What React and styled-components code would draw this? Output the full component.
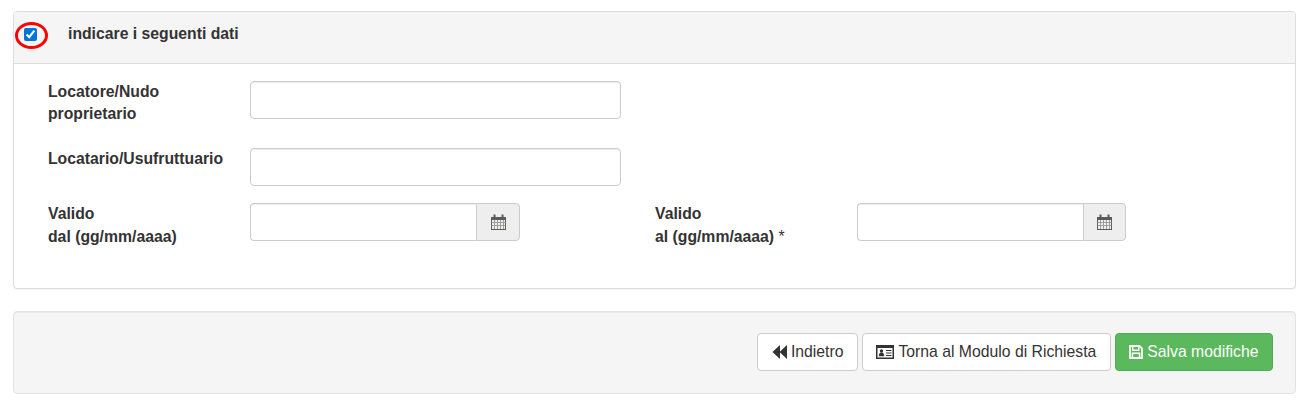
import React from "react";
import styled, { createGlobalStyle } from "styled-components";

const Global = createGlobalStyle`
  html, body { margin: 0; padding: 0; background: #fff; }
  body { font-family: "Liberation Sans", Arial, sans-serif; font-size: 15.75px; line-height: 22.5px; color: #333; }
  * { box-sizing: border-box; }
`;

const Page = styled.div`
  width: 1312px;
  height: 402px;
  padding: 11px 16px 0 13px;
  overflow: hidden;
`;

const Panel = styled.section`
  position: relative;
  border: 1px solid #ddd;
  border-radius: 4px;
  background: #fff;
  box-shadow: 0 1px 1px rgba(0, 0, 0, 0.05);
  height: 278px;
`;

const Heading = styled.header`
  height: 52px;
  display: flex;
  align-items: flex-start;
  background: #f5f5f5;
  border-bottom: 1px solid #ddd;
  border-radius: 3px 3px 0 0;
  padding: 11px 0 0 10px;
`;

const Check = styled.input`
  width: 13px;
  height: 13px;
  margin: 5px 0 0 0;
  accent-color: #0075d8;
`;

const HeadingTitle = styled.span`
  margin-left: 31px;
  font-weight: 700;
  color: #333;
`;

const Marker = styled.span`
  position: absolute;
  left: 0.5px;
  top: 10px;
  width: 33px;
  height: 27px;
  border: 3.5px solid #f00;
  border-radius: 50%;
  pointer-events: none;
`;

const Body = styled.div`
  padding: 16px 0 0 34px;
  display: flex;
  flex-direction: column;
`;

const Row = styled.div`
  display: flex;
  align-items: flex-start;
  height: ${(p) => p.$height}px;
`;

const Label = styled.label`
  display: block;
  width: 202px;
  flex: none;
  font-weight: 700;
  line-height: 22.5px;
  padding-top: ${(p) => p.$nudge ?? 0.5}px;
`;

const Asterisk = styled.span`
  font-weight: 400;
`;

const TextInput = styled.input`
  display: block;
  width: 371px;
  height: 38px;
  margin-top: 1px;
  border: 1px solid #ccc;
  border-radius: 4px;
  background: #fff;
  box-shadow: inset 0 1px 1px rgba(0, 0, 0, 0.075);
`;

const DateGroup = styled.div`
  display: flex;
  width: ${(p) => p.$width}px;
  height: 38px;
  margin-top: 1px;
  flex: none;
`;

const DateInput = styled.input`
  flex: 1;
  min-width: 0;
  height: 38px;
  border: 1px solid #ccc;
  border-right: 0;
  border-radius: 4px 0 0 4px;
  background: #fff;
  box-shadow: inset 0 1px 1px rgba(0, 0, 0, 0.075);
`;

const Addon = styled.span`
  width: ${(p) => p.$width}px;
  flex: none;
  display: flex;
  align-items: center;
  justify-content: center;
  background: #eee;
  border: 1px solid #ccc;
  border-radius: 0 4px 4px 0;
`;

const SecondColumn = styled.div`
  display: flex;
  margin-left: 135px;
`;

const ActionPanel = styled.section`
  margin-top: 22px;
  height: 83px;
  border: 1px solid #e3e3e3;
  border-radius: 4px;
  background: #f5f5f5;
  box-shadow: inset 0 1px 1px rgba(0, 0, 0, 0.05);
  display: flex;
  justify-content: flex-end;
  align-items: flex-start;
  gap: 4px;
  padding: 21px 22px 0 0;
`;

const Button = styled.button`
  height: 38px;
  padding: 0 13.5px;
  display: inline-flex;
  align-items: center;
  gap: 4px;
  font: 400 15.75px/22.5px "Liberation Sans", Arial, sans-serif;
  color: ${(p) => (p.$primary ? "#fff" : "#333")};
  background: ${(p) => (p.$primary ? "#5cb85c" : "#fff")};
  border: 1px solid ${(p) => (p.$primary ? "#4cae4c" : "#ccc")};
  border-radius: 4px;
  white-space: nowrap;
`;

const Calendar = () => (
  <svg width="15" height="16" viewBox="0 0 15 16" fill="none" aria-hidden="true">
    <rect x="0.5" y="3.5" width="14" height="12" fill="#f2f0ec" stroke="#5a5a5a" />
    <rect x="0.5" y="3" width="14" height="3" fill="#5a5a5a" />
    <path d="M3.5 0.5v3.5M11.5 0.5v3.5" stroke="#5a5a5a" strokeWidth="2" />
    <path d="M0.5 8.5h14M0.5 11.5h14M3.5 6v9M6.5 6v9M9.5 6v9M12.5 6v9" stroke="#a09c98" strokeWidth="1" />
  </svg>
);

const BackIcon = () => (
  <svg width="15" height="14" viewBox="0 0 15 14" fill="currentColor" aria-hidden="true">
    <path d="M0.5 7 8 0v14zM7.5 7 15 0v14z" />
  </svg>
);

const CardIcon = () => (
  <svg width="18" height="14" viewBox="0 0 18 14" aria-hidden="true">
    <rect x="0.75" y="0.75" width="16.5" height="12.5" fill="none" stroke="currentColor" strokeWidth="1.5" />
    <rect x="1" y="1" width="16" height="2" fill="currentColor" />
    <circle cx="5.5" cy="6" r="1.7" fill="currentColor" />
    <path d="M2.8 11.2c0-2.6 1.1-3.6 2.7-3.6s2.7 1 2.7 3.6z" fill="currentColor" />
    <path d="M10 5.5h5.5M10 8h5.5M10 10.5h5.5" stroke="currentColor" strokeWidth="1" fill="none" />
  </svg>
);

const SaveIcon = () => (
  <svg width="14" height="14" viewBox="0 0 14 14" fill="none" stroke="currentColor" aria-hidden="true">
    <path d="M1 1h9.5L13 3.5V13H1z" strokeWidth="1.8" />
    <path d="M3.7 1v4.3h6V1" strokeWidth="1.5" />
    <path d="M3.5 13V8.3h7V13" strokeWidth="1.5" />
  </svg>
);

export default function App() {
  return (
    <Page>
      <Global />
      <Panel>
        <Heading>
          <Check type="checkbox" defaultChecked />
          <HeadingTitle>indicare i seguenti dati</HeadingTitle>
        </Heading>
        <Marker />
        <Body>
          <Row $height={67}>
            <Label>Locatore/Nudo<br />proprietario</Label>
            <TextInput />
          </Row>
          <Row $height={55}>
            <Label>Locatario/Usufruttuario</Label>
            <TextInput />
          </Row>
          <Row $height={60}>
            <Label $nudge={1}>Valido<br />dal (gg/mm/aaaa)</Label>
            <DateGroup $width={270}>
              <DateInput />
              <Addon $width={44}><Calendar /></Addon>
            </DateGroup>
            <SecondColumn>
              <Label $nudge={1}>Valido<br />al (gg/mm/aaaa) <Asterisk>*</Asterisk></Label>
              <DateGroup $width={269}>
                <DateInput />
                <Addon $width={43}><Calendar /></Addon>
              </DateGroup>
            </SecondColumn>
          </Row>
        </Body>
      </Panel>
      <ActionPanel>
        <Button><BackIcon />Indietro</Button>
        <Button><CardIcon />Torna al Modulo di Richiesta</Button>
        <Button $primary><SaveIcon />Salva modifiche</Button>
      </ActionPanel>
    </Page>
  );
}
